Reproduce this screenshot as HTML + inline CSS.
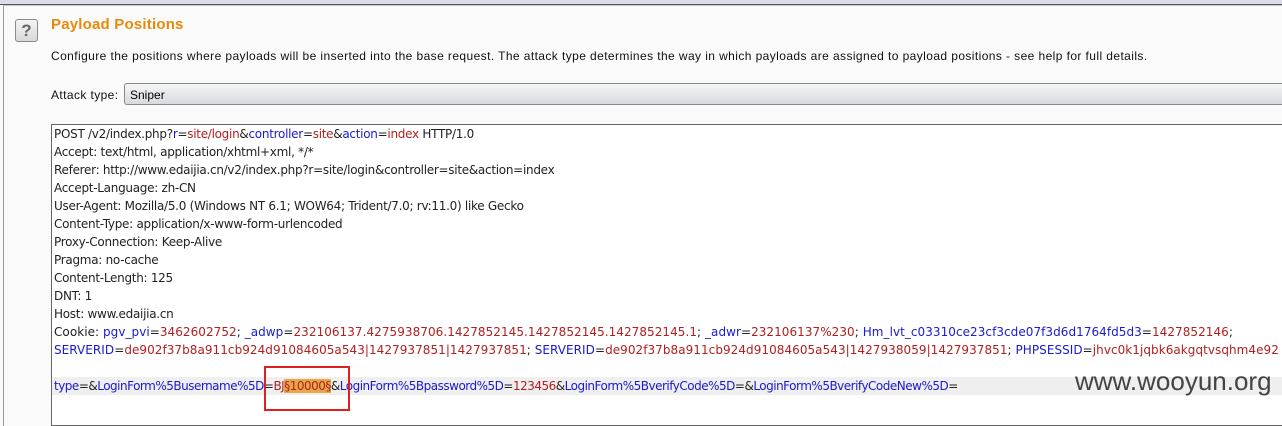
<!DOCTYPE html>
<html><head><style>
body{margin:0;width:1282px;height:409px;overflow:hidden;background:#fafafb;font-family:"Liberation Sans",sans-serif;position:relative}
.topline{position:absolute;left:0;top:0;width:1282px;height:4px;background:#d8dde6;border-bottom:1px solid #50565e}
.panel{position:absolute;left:3px;top:5px;width:1290px;height:420px;border-left:1px solid #9a9a9a;border-top:1px solid #c8c8c8}
.help{position:absolute;left:15px;top:19px;width:21px;height:21px;border:1px solid #8a8a8a;border-radius:3px;background:linear-gradient(#f4f4f4,#d8d8d8);font:bold 17px "Liberation Sans",sans-serif;color:#666;text-align:center;line-height:21px}
h1{position:absolute;left:51px;top:16px;margin:0;font:bold 15px "Liberation Sans",sans-serif;color:#e8890a;letter-spacing:.2px}
.desc{position:absolute;left:51px;top:49px;font-size:12px;color:#111;letter-spacing:.41px;white-space:nowrap}
.lab{position:absolute;left:51px;top:88px;font-size:12px;color:#111;letter-spacing:.4px}
.sel{position:absolute;left:124px;top:83px;width:1170px;height:22px;border:1px solid #888;border-radius:3px;background:linear-gradient(#f6f6f8,#d7dae0);font-size:12px;line-height:22px;padding-left:5px;box-sizing:border-box}
.ed{position:absolute;left:51px;top:124px;width:1240px;height:300px;border:1px solid #666;background:#fff}
.ln{position:absolute;left:2px;font:12px/18px "DejaVu Sans",sans-serif;color:#222;white-space:nowrap;letter-spacing:-.28px}
.ck{letter-spacing:.05px}
.ty{letter-spacing:-.5px}
.b{color:#1a1ad0}.r{color:#b02020}
.hl{position:absolute;left:0;top:252px;width:1240px;height:18px;background:#efefef}
.mk{background:#e8a84a;color:#b02020}
.box{position:absolute;left:264px;top:366px;width:86px;height:45px;border:2px solid #e02020;box-sizing:border-box}
.wm{position:absolute;left:1075px;top:366px;font-size:26px;color:#444}
</style></head><body>
<div class="topline"></div>
<div class="panel"></div>
<div class="help">?</div>
<h1>Payload Positions</h1>
<div class="desc">Configure the positions where payloads will be inserted into the base request. The attack type determines the way in which payloads are assigned to payload positions - see help for full details.</div>
<div class="lab">Attack type:</div>
<div class="sel">Sniper</div>
<div class="ed">
<div class="hl"></div>
<div class="ln" style="top:0">POST /v2/index.php?<span class="b">r</span>=<span class="r">site/login</span>&amp;<span class="b">controller</span>=<span class="r">site</span>&amp;<span class="b">action</span>=<span class="r">index</span> HTTP/1.0</div>
<div class="ln" style="top:18px">Accept: text/html, application/xhtml+xml, */*</div>
<div class="ln" style="top:36px">Referer: http://www.edaijia.cn/v2/index.php?r=site/login&amp;controller=site&amp;action=index</div>
<div class="ln" style="top:54px">Accept-Language: zh-CN</div>
<div class="ln" style="top:72px">User-Agent: Mozilla/5.0 (Windows NT 6.1; WOW64; Trident/7.0; rv:11.0) like Gecko</div>
<div class="ln" style="top:90px">Content-Type: application/x-www-form-urlencoded</div>
<div class="ln" style="top:108px">Proxy-Connection: Keep-Alive</div>
<div class="ln" style="top:126px">Pragma: no-cache</div>
<div class="ln" style="top:144px">Content-Length: 125</div>
<div class="ln" style="top:162px">DNT: 1</div>
<div class="ln" style="top:180px">Host: www.edaijia.cn</div>
<div class="ln ck" style="top:198px">Cookie: <span class="b">pgv_pvi</span>=<span class="r">3462602752</span>; <span class="b">_adwp</span>=<span class="r">232106137.4275938706.1427852145.1427852145.1427852145.1</span>; <span class="b">_adwr</span>=<span class="r">232106137%230</span>; <span class="b">Hm_lvt_c03310ce23cf3cde07f3d6d1764fd5d3</span>=<span class="r">1427852146</span>;</div>
<div class="ln ck" style="top:216px"><span class="b">SERVERID</span>=<span class="r">de902f37b8a911cb924d91084605a543|1427937851|1427937851</span>; <span class="b">SERVERID</span>=<span class="r">de902f37b8a911cb924d91084605a543|1427938059|1427937851</span>; <span class="b">PHPSESSID</span>=<span class="r">jhvc0k1jqbk6akgqtvsqhm4e92</span></div>
<div class="ln ty" style="top:252px"><span class="b">type</span>=&amp;<span class="b">LoginForm%5Busername%5D</span>=<span class="r">BJ</span><span class="mk">§10000§</span>&amp;<span class="b">LoginForm%5Bpassword%5D</span>=<span class="r">123456</span>&amp;<span class="b">LoginForm%5BverifyCode%5D</span>=&amp;<span class="b">LoginForm%5BverifyCodeNew%5D</span>=</div>
</div>
<div class="box"></div>
<div class="wm">www.wooyun.org</div>
</body></html>
